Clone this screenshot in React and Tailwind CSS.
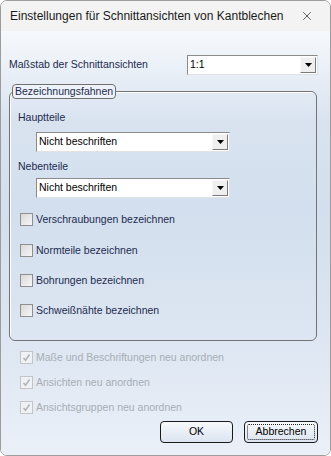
import { X } from "lucide-react";

function Combo({ value, className }) {
    return (
        <div className={`flex h-[20px] border border-[#8a8a8a] border-b-[#e2e2e2] border-r-[#e2e2e2] bg-white ${className}`}>
            <div className="flex-1 flex items-center pl-[2px] text-[10.5px] text-black">{value}</div>
            <div className="my-[1px] mr-[1px] w-[16px] flex items-center justify-center bg-[#efefef] border border-[#f8f8f8] border-b-[#7a7a7a] border-r-[#7a7a7a]">
                <svg width="7" height="4" viewBox="0 0 7 4">
                    <path d="M0 0h7L3.5 4z" fill="#000" />
                </svg>
            </div>
        </div>
    );
}

function Check({ label, disabled, className }) {
    return (
        <div className={`flex items-center h-[13px] ${className}`}>
            {disabled ? (
                <div className="w-[13px] h-[13px] border border-[#c4c4c4] bg-[#eef1f5] flex items-center justify-center">
                    <svg width="9" height="9" viewBox="0 0 9 9">
                        <path d="M1.5 5l2 2.2L7.5 1.5" stroke="#b2b2b2" strokeWidth="1.5" fill="none" />
                    </svg>
                </div>
            ) : (
                <div className="w-[13px] h-[13px] border border-[#8f8f8f] bg-[linear-gradient(135deg,#d9d9d9,#f6f6f6)]" />
            )}
            <span className={`ml-[3px] text-[10.5px] leading-[13px] whitespace-nowrap ${disabled ? "text-[#a7adb5]" : "text-[#1c2a4e]"}`}>
                {label}
            </span>
        </div>
    );
}

export default function App() {

    return (
        <div className="w-[331px] h-[456px] bg-white" style={{ fontFamily: '"Liberation Sans", Arial, sans-serif' }}>

            <div className="w-full h-full flex flex-col border border-[#9c9c9c] rounded-[7px] overflow-hidden">

                {/* TITLE BAR */}
                <div className="h-[30px] shrink-0 flex items-center justify-between bg-[#f3f3f3] pl-[9px] pr-[16px]">
                    <span className="text-[12px] whitespace-nowrap text-[#1a1a1a]">
                        Einstellungen für Schnittansichten von Kantblechen
                    </span>
                    <X size={14} strokeWidth={1.2} className="text-[#222]" />
                </div>

                {/* BODY */}
                <div className="flex-1 flex flex-col bg-[linear-gradient(180deg,#f6f9fc_0px,#d9e3f0_90px,#d3dfee_180px,#dde6f2_310px,#ebf0f8_425px)]">

                    <div className="mt-[24px] flex items-center h-[20px]">
                        <span className="ml-[8px] w-[178px] text-[10.5px] text-[#1c2a4e]">Maßstab der Schnittansichten</span>
                        <Combo value="1:1" className="w-[131px]" />
                    </div>

                    <fieldset className="mt-[9px] ml-[8px] w-[308px] h-[257px] border border-[#747474] rounded-[6px] shadow-[inset_1px_1px_0_#ffffff]">
                        <legend className="ml-[2px] h-[15px] px-[2px] flex items-center border border-[#6f6f6f] rounded-[4px] bg-[#eef3fa] text-[10.5px] text-[#1c2a4e]">
                            Bezeichnungsfahnen
                        </legend>

                        <div className="flex flex-col">
                            <span className="mt-[12px] ml-[8px] h-[13px] leading-[13px] text-[10.5px] text-[#1c2a4e]">Hauptteile</span>
                            <Combo value="Nicht beschriften" className="mt-[8px] ml-[26px] w-[194px]" />
                            <span className="mt-[8px] ml-[8px] h-[13px] leading-[13px] text-[10.5px] text-[#1c2a4e]">Nebenteile</span>
                            <Combo value="Nicht beschriften" className="mt-[5px] ml-[26px] w-[194px]" />

                            <Check label="Verschraubungen bezeichnen" className="mt-[15px] ml-[10px]" />
                            <Check label="Normteile bezeichnen" className="mt-[18px] ml-[10px]" />
                            <Check label="Bohrungen bezeichnen" className="mt-[17px] ml-[10px]" />
                            <Check label="Schweißnähte bezeichnen" className="mt-[17px] ml-[10px]" />
                        </div>
                    </fieldset>

                    <Check disabled label="Maße und Beschriftungen neu anordnen" className="mt-[10px] ml-[19px]" />
                    <Check disabled label="Ansichten neu anordnen" className="mt-[12px] ml-[19px]" />
                    <Check disabled label="Ansichtsgruppen neu anordnen" className="mt-[12px] ml-[19px]" />

                    <div className="mt-[7px] flex justify-end gap-[11px] pr-[12px]">
                        <button className="w-[73px] h-[22px] rounded-[4px] border border-[#1a1a1a] bg-[linear-gradient(180deg,#f7f9fc,#dbe4f0)] text-[10.5px] text-black">
                            OK
                        </button>
                        <button className="w-[74px] h-[22px] rounded-[4px] border border-[#1a1a1a] bg-[linear-gradient(180deg,#f7f9fc,#dbe4f0)] p-[2px] text-[10.5px] text-black">
                            <div className="w-full h-full flex items-center justify-center border border-dotted border-[#222] rounded-[2px]">
                                Abbrechen
                            </div>
                        </button>
                    </div>

                </div>

            </div>

        </div>
    );
}
